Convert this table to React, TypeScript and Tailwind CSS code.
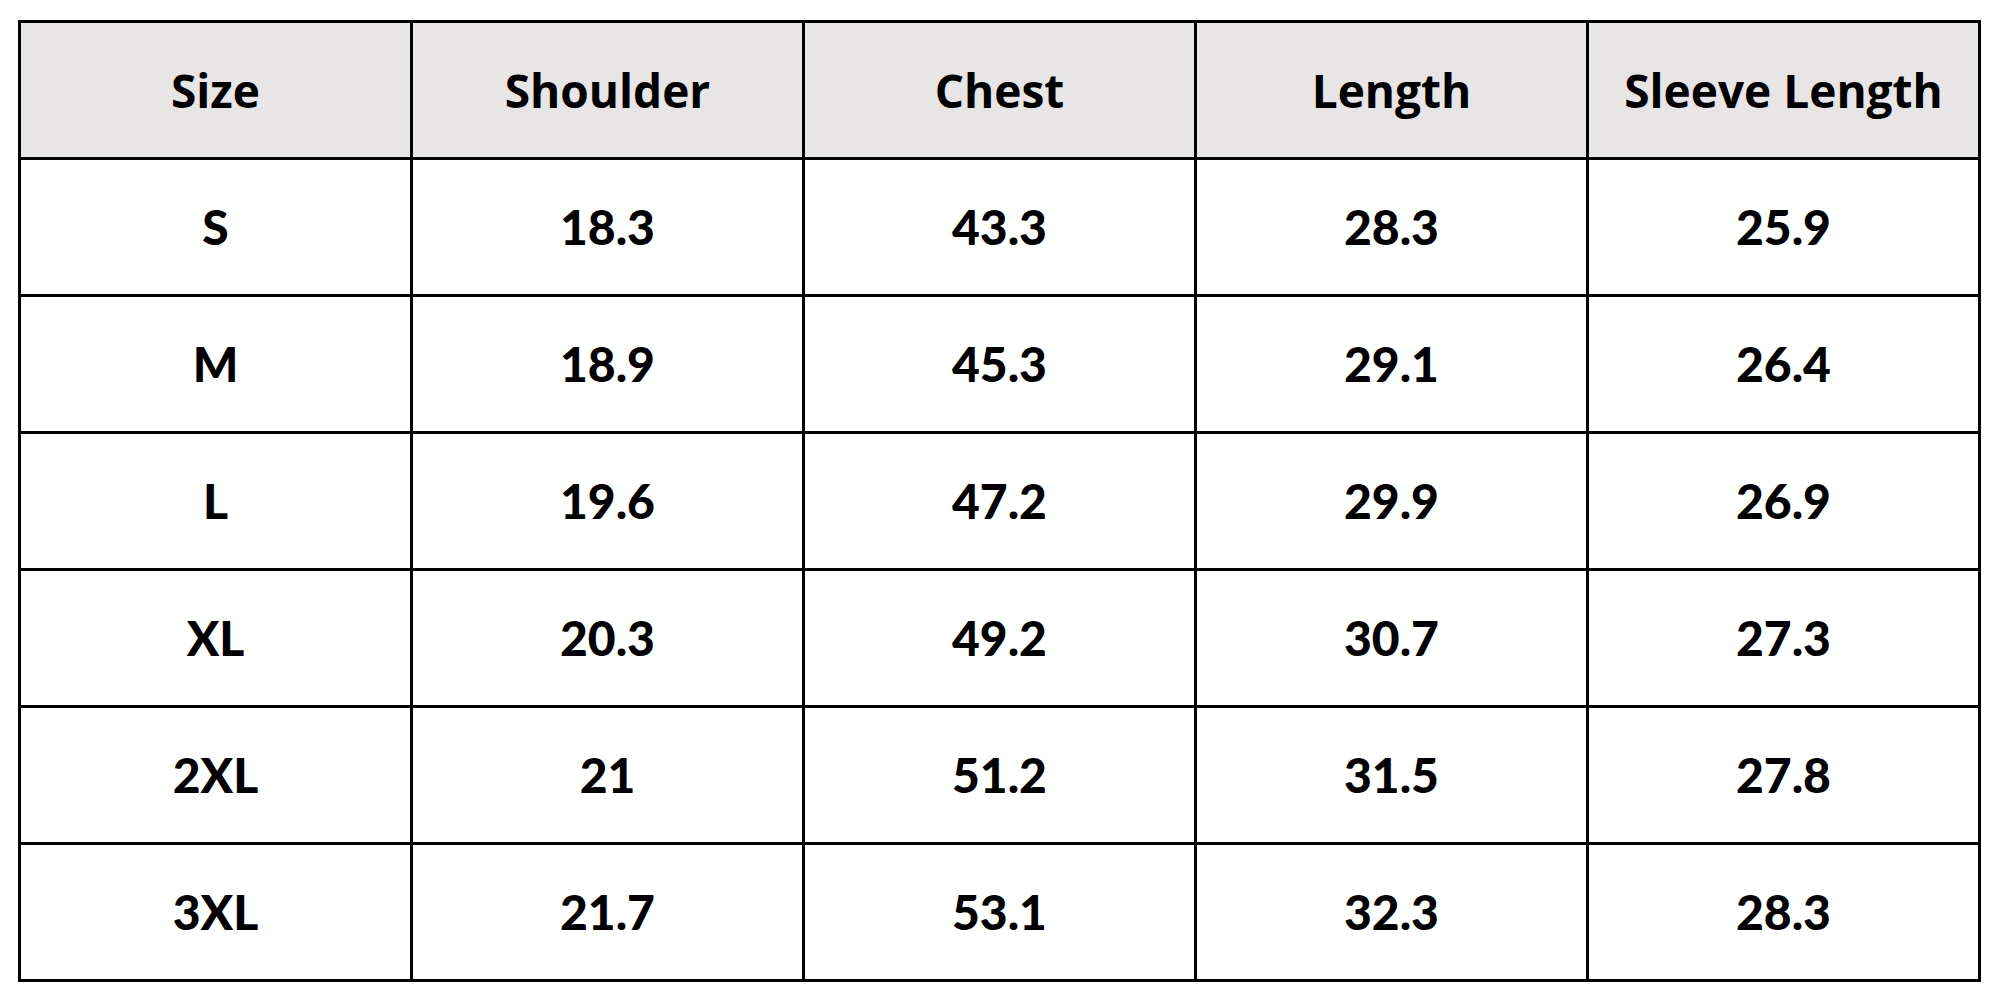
const headers = ['Size', 'Shoulder', 'Chest', 'Length', 'Sleeve Length']

const rows = [
  ['S', '18.3', '43.3', '28.3', '25.9'],
  ['M', '18.9', '45.3', '29.1', '26.4'],
  ['L', '19.6', '47.2', '29.9', '26.9'],
  ['XL', '20.3', '49.2', '30.7', '27.3'],
  ['2XL', '21', '51.2', '31.5', '27.8'],
  ['3XL', '21.7', '53.1', '32.3', '28.3'],
]

export default function App() {
  return (
    <main className="h-[1000px] w-[2000px] bg-white pl-[18px] pt-[20px] text-black">
      <div className="grid w-[1963px] grid-cols-5 border-l-[3px] border-t-[3px] border-black">
        {headers.map((label) => (
          <div
            key={label}
            className="flex h-[137px] items-center justify-center border-b-[3px] border-r-[3px] border-black bg-[#e7e5e6] font-['Open_Sans',sans-serif] text-[46px] font-bold"
          >
            {label}
          </div>
        ))}

        {rows.map((row) =>
          row.map((value, i) => (
            <div
              key={row[0] + i}
              className="flex h-[137px] items-center justify-center border-b-[3px] border-r-[3px] border-black font-['Lato',sans-serif] text-[48px] font-black"
            >
              {value}
            </div>
          ))
        )}
      </div>
    </main>
  )
}
